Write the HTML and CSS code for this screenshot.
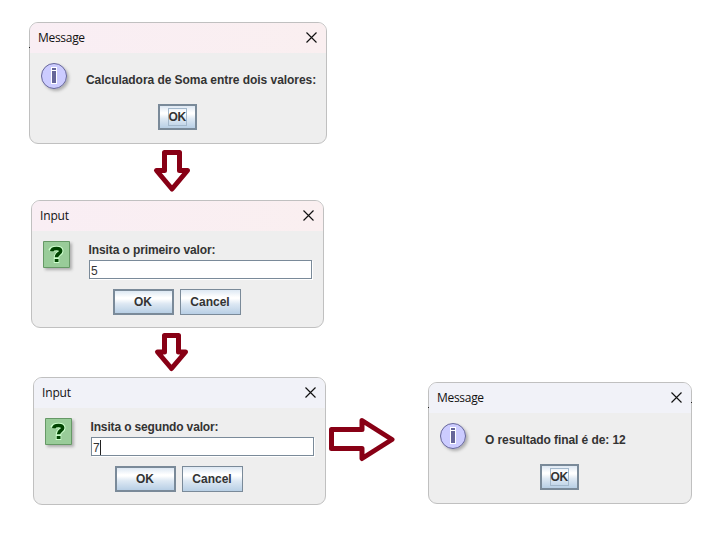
FILE: index.html
```
<!DOCTYPE html>
<html lang="pt">
<head>
<meta charset="utf-8">
<title>Calculadora de Soma</title>
<link rel="stylesheet" href="styles.css">
</head>
<body>
<svg class="defs" width="0" height="0" aria-hidden="true">
  <defs>
    <filter id="shade" x="-20%" y="-20%" width="160%" height="160%"><feDropShadow dx="2" dy="2" stdDeviation="1.5" flood-color="#000" flood-opacity=".27"/></filter>
    <symbol id="info" viewBox="0 0 34 34">
      <circle cx="13" cy="13" r="12.500" fill="#ccf" stroke="#669" filter="url(#shade)"/>
      <path d="M10 4h6v17h-6z" fill="#fff"/>
      <path d="M11 5h4v2h-4zM11 8h4v12h-4z" fill="#669"/>
    </symbol>
    <symbol id="question" viewBox="0 0 34 34">
      <path d="M.5 .5h26v26h-26z" fill="#9c9" stroke="#696" filter="url(#shade)"/>
      <g fill="none" stroke="#cfc" stroke-width="5.500"><path d="M8 9.900C8.800 7.400 11 7.400 13.500 7.400c2.800 0 4.300.7 4.300 2.500 0 2.700-4.200 2.500-4.200 6"/><path d="M13.500 16v6"/></g>
      <path d="M8.700 10.200C9 7.600 11 7.500 13.500 7.500c2.800 0 4.200.7 4.200 2.500 0 2.600-4.200 2.600-4.200 6.200" fill="none" stroke="#040" stroke-width="3.500"/>
      <path d="M11.700 18h3.800v3h-3.800z" fill="#040"/>
    </symbol>
    <symbol id="close" viewBox="0 0 11 11"><path d="M.5 .5l10 10M10.500 .5L.5 10.500" stroke="#111" stroke-width="1.150"/></symbol>
  </defs>
</svg>
<main class="canvas">
  <section class="dialog message warm d1">
    <header><span class="title">Message</span><svg class="x"><use href="#close"/></svg></header>
    <div class="content"><svg class="icon"><use href="#info"/></svg><p class="text t1">Calculadora de Soma entre dois valores:</p></div>
    <div class="actions"><button class="default small"><span>OK</span></button></div>
  </section>
  <section class="dialog input warm d2">
    <header><span class="title">Input</span><svg class="x"><use href="#close"/></svg></header>
    <div class="content"><svg class="icon"><use href="#question"/></svg><div class="form"><label class="t2">Insita o primeiro valor:</label><div class="field">5</div></div></div>
    <div class="actions"><button class="default">OK</button><button>Cancel</button></div>
  </section>
  <section class="dialog input d3">
    <header><span class="title">Input</span><svg class="x"><use href="#close"/></svg></header>
    <div class="content"><svg class="icon"><use href="#question"/></svg><div class="form"><label class="t3">Insita o segundo valor:</label><div class="field">7<i class="caret"></i></div></div></div>
    <div class="actions"><button class="default">OK</button><button>Cancel</button></div>
  </section>
  <section class="dialog message d4">
    <header><span class="title">Message</span><svg class="x"><use href="#close"/></svg></header>
    <div class="content"><svg class="icon"><use href="#info"/></svg><p class="text t4">O resultado final é de: 12</p></div>
    <div class="actions"><button class="default small"><span>OK</span></button></div>
  </section>
  <svg class="arrows" viewBox="0 0 720 543">
    <path d="M164.500 152.500h15v18h8L172 189l-15.500-18.500h8z"/>
    <path d="M164.500 335.500h14v16.500h7L171.500 368.500l-14-16.500h7z"/>
    <path d="M331.500 429.500h30.500v-9l30 19-30 19v-10h-30.500z"/>
  </svg>
</main>
</body>
</html>
```
FILE: styles.css
```
* { box-sizing: border-box; }
body { margin: 0; background: #fff; }
.defs { position: absolute; }
.canvas { position: relative; width: 720px; height: 543px; overflow: hidden; }

.dialog {
  position: absolute;
  border: 1px solid #c0c0c0;
  border-radius: 9px;
  background: #eee;
  font: bold 12px/14px "Liberation Sans", sans-serif;
  color: #333;
}
.d1 { left: 29px; top: 22px; width: 298px; height: 122px; }
.d2 { left: 31px; top: 200px; width: 293px; height: 128px; }
.d3 { left: 33px; top: 377px; width: 293px; height: 128px; }
.d4 { left: 428px; top: 382px; width: 264px; height: 122px; }
.d1::before, .d4::before {
  content: "";
  position: absolute;
  left: -1px;
  top: 24px;
  width: 1px;
  height: 1px;
  background: #222;
}
.d4::after {
  content: "";
  position: absolute;
  right: -1px;
  top: 19px;
  width: 1px;
  height: 1px;
  background: #222;
}

header {
  display: flex;
  justify-content: space-between;
  height: 30px;
  padding: 9px 9.5px 0 8px;
  border-radius: 8px 8px 0 0;
  background: #f1f2f8;
}
.warm header { background: linear-gradient(90deg, #f9eef4, #faeff0); }
.title { margin-top: -1px; font: 12px/14px "Open Sans", sans-serif; letter-spacing: -.3px; color: #111; }
.input .title { letter-spacing: -.15px; }
.x { width: 11px; height: 11px; }

.content { display: flex; padding: 10px 11px 0; }
.icon { width: 34px; height: 34px; flex: none; }
.text { margin: 10px 0 0 11px; white-space: nowrap; letter-spacing: -.05px; }
.t4 { letter-spacing: -.08px; }
.form { margin: 2px 0 0 12px; flex: none; }
label { display: block; height: 17px; margin-left: -.5px; white-space: nowrap; letter-spacing: -.1px; }
.t3 { letter-spacing: -.15px; }
.field {
  display: flex;
  width: 223px;
  height: 19px;
  padding: 3px 1px;
  border: 1px solid #7a8a99;
  box-shadow: 1px 1px #fff;
  background: #fff;
  font-weight: normal;
}
.caret { width: 1px; height: 15px; margin-top: -1px; background: #222; }

.actions { display: flex; justify-content: center; gap: 6px; padding-right: 2px; }
.message .actions { padding-top: 7px; }
.input .actions { padding-top: 9px; }
.input .content { height: 49px; }
button {
  width: 61px;
  height: 26px;
  padding: 0;
  border: 1px solid #7a8a99;
  background: linear-gradient(#dde8f3, #fff 30%, #fff 36%, #dde8f3 58%, #b8cfe5);
  font: inherit;
  color: inherit;
}
.default { border-width: 2px; }
.small { display: flex; align-items: center; justify-content: center; width: 39px; }
.small span { width: 19px; height: 18px; border: 1px solid #a3b8cc; line-height: 17px; letter-spacing: -.3px; text-align: left; }

.arrows { position: absolute; inset: 0; width: 720px; height: 543px; }
.arrows path { fill: #fff; stroke: #880015; stroke-width: 5; stroke-linejoin: round; }
```
